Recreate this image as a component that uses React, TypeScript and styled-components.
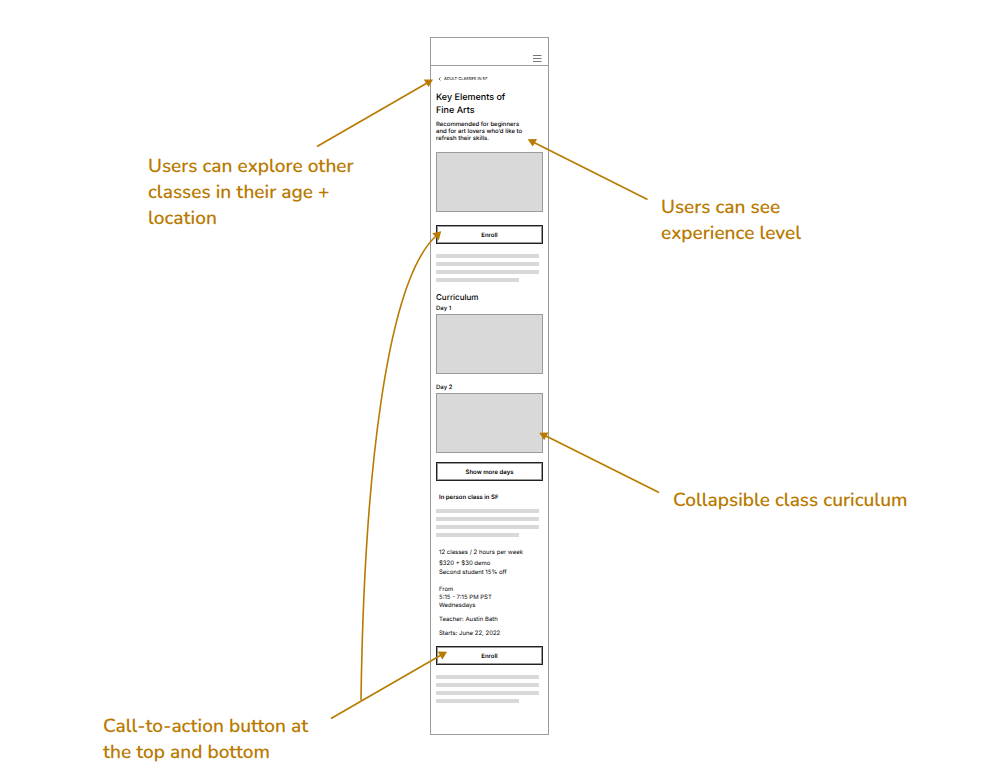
import React from "react";
import styled, { createGlobalStyle } from "styled-components";

const ACCENT = "#b97a00";

const GlobalStyle = createGlobalStyle`
  *, *::before, *::after { box-sizing: border-box; }
  body { margin: 0; background: #fff; text-rendering: geometricPrecision; }
  h1, h2, h3, p { margin: 0; }
  button { text-rendering: inherit; }
`;

const Board = styled.main`
  display: grid;
  grid-template-columns: minmax(0, 1fr) 119px minmax(0, 1fr);
  align-items: start;
  min-height: 100vh;
  padding: 37px 21px 0 0;
`;

const NoteColumn = styled.aside<{ $side: "left" | "right" }>`
  display: flex;
  flex-direction: column;
  align-items: ${(p) => (p.$side === "left" ? "flex-end" : "flex-start")};
`;

const Note = styled.p<{ $above: number; $inset: number; $width?: number }>`
  width: ${(p) => (p.$width ? `${p.$width}px` : "auto")};
  margin-top: ${(p) => p.$above}px;
  margin-inline: ${(p) => (p.$width ? `0 ${p.$inset}px` : `${p.$inset}px 0`)};
  color: ${ACCENT};
  font: 600 19px/26px Nunito, sans-serif;
  white-space: nowrap;
`;

const Phone = styled.section`
  position: relative;
  border: 1px solid #9b9b9b;
  padding-bottom: 31px;
  font-family: Inter, sans-serif;
  color: #000;
`;

const Header = styled.header`
  display: flex;
  justify-content: flex-end;
  align-items: flex-end;
  height: 28px;
  padding: 0 6px 2px 0;
  border-bottom: 1px solid #9b9b9b;
`;

const MenuButton = styled.button`
  display: flex;
  padding: 0;
  border: 0;
  background: none;
`;

const Content = styled.div`
  display: flex;
  flex-direction: column;
  padding: 10px 5px 0;
`;

const Breadcrumb = styled.a`
  display: flex;
  align-items: center;
  gap: 3px;
  padding-left: 2px;
  color: #000;
  font-size: 4px;
  line-height: 6px;
  text-decoration: none;
  white-space: nowrap;
`;

const Title = styled.h1`
  margin-top: 9px;
  font-size: 9px;
  line-height: 13px;
  font-weight: 500;
`;

const Subtitle = styled.p`
  margin-top: 4px;
  font-size: 6px;
  line-height: 7px;
  font-weight: 500;
  white-space: nowrap;
`;

const Media = styled.div<{ $above: number }>`
  height: 60px;
  margin-top: ${(p) => p.$above}px;
  border: 1px solid #9b9b9b;
  background: #d9d9d9;
`;

const Action = styled.button<{ $above: number }>`
  height: 19px;
  margin-top: ${(p) => p.$above}px;
  padding: 2px 0 0;
  border: 1px solid #222;
  box-shadow: inset 0 0 0 1px #999;
  background: #fff;
  color: #000;
  font: 600 6px/8px Inter, sans-serif;
`;

const Bars = styled.div<{ $above: number }>`
  display: flex;
  flex-direction: column;
  gap: 4px;
  margin-top: ${(p) => p.$above}px;
`;

const Bar = styled.div<{ $short?: boolean }>`
  height: 4px;
  width: ${(p) => (p.$short ? "78%" : "96%")};
  background: #d9d9d9;
`;

const SectionTitle = styled.h2`
  margin-top: 10px;
  font-size: 8px;
  line-height: 10px;
  font-weight: 500;
`;

const DayTitle = styled.h3<{ $above: number }>`
  margin-top: ${(p) => p.$above}px;
  font-size: 6px;
  line-height: 8px;
  font-weight: 500;
`;

const ClassType = styled.h2`
  margin: 13px 0 0 3px;
  font-size: 6px;
  line-height: 8px;
  font-weight: 600;
`;

const Detail = styled.p<{ $above?: number }>`
  margin: ${(p) => p.$above ?? 0}px 0 0 3px;
  font-size: 6px;
  line-height: 8px;
  font-weight: 400;
  white-space: nowrap;
`;

const Arrows = styled.svg`
  position: absolute;
  top: 0;
  left: -131px;
  pointer-events: none;
`;

const Paragraph = ({ above }: { above: number }) => (
  <Bars $above={above}>
    <Bar />
    <Bar />
    <Bar />
    <Bar $short />
  </Bars>
);

export default function App() {
  return (
    <>
      <GlobalStyle />
      <Board>
        <NoteColumn $side="left">
          <Note $above={116} $inset={62} $width={220}>
            Users can explore other
            <br />
            classes in their age +
            <br />
            location
          </Note>
          <Note $above={482} $inset={99} $width={228}>
            Call-to-action button at
            <br />
            the top and bottom
          </Note>
        </NoteColumn>

        <Phone>
          <Header>
            <MenuButton aria-label="Menu">
              <svg width="10" height="10" viewBox="0 0 10 10" stroke="#777" strokeWidth="1">
                <path d="M1 2.5H9.5M1 5.5H9.5M1 8.5H9.5" />
              </svg>
            </MenuButton>
          </Header>
          <Content>
            <Breadcrumb href="#">
              <svg width="3" height="4" viewBox="0 0 3 4" fill="none" stroke="#222" strokeWidth="0.7">
                <path d="M2.4 0.5L0.9 2L2.4 3.5" />
              </svg>
              ADULT CLASSES IN SF
            </Breadcrumb>
            <Title>
              Key Elements of
              <br />
              Fine Arts
            </Title>
            <Subtitle>
              Recommended for beginners
              <br />
              and for art lovers who’d like to
              <br />
              refresh their skills.
            </Subtitle>
            <Media $above={10} />
            <Action $above={13}>Enroll</Action>
            <Paragraph above={10} />
            <SectionTitle>Curriculum</SectionTitle>
            <DayTitle $above={3}>Day 1</DayTitle>
            <Media $above={1} />
            <DayTitle $above={10}>Day 2</DayTitle>
            <Media $above={1} />
            <Action $above={9}>Show more days</Action>
            <ClassType>In person class in SF</ClassType>
            <Paragraph above={7} />
            <Detail $above={12}>12 classes / 2 hours per week</Detail>
            <Detail $above={3}>$320 + $30 demo</Detail>
            <Detail $above={1}>Second student 15% off</Detail>
            <Detail $above={9}>From</Detail>
            <Detail>5:15 - 7:15 PM PST</Detail>
            <Detail>Wednesdays</Detail>
            <Detail $above={6}>Teacher: Austin Bath</Detail>
            <Detail $above={6}>Starts: June 22, 2022</Detail>
            <Action $above={8}>Enroll</Action>
            <Paragraph above={10} />
          </Content>
          <Arrows width="400" height="697" viewBox="300 38 400 697" aria-hidden="true">
            <g fill="none" stroke={ACCENT} strokeWidth="1.6">
              <path d="M317 146.5L428 82.5" />
              <path d="M647.5 199.5L532 141.5" />
              <path d="M659 492.5L544 435" />
              <path d="M331 718.5L442 654.5" />
              <path d="M361 700C364 480 386 282 436 236" />
            </g>
            <g fill={ACCENT}>
              <path d="M423.8 79.6L433 79.6L428.6 87Z" />
              <path d="M527.6 139.2L537 139L532.8 146.6Z" />
              <path d="M539.2 432.8L548.4 432.4L544.2 440.2Z" />
              <path d="M437.6 651.6L447 651.8L442.4 659.6Z" />
              <path d="M432.2 233.2L441.2 231.2L438.8 240.2Z" />
            </g>
          </Arrows>
        </Phone>

        <NoteColumn $side="right">
          <Note $above={157} $inset={112}>
            Users can see
            <br />
            experience level
          </Note>
          <Note $above={241} $inset={124}>
            Collapsible class curiculum
          </Note>
        </NoteColumn>
      </Board>
    </>
  );
}
